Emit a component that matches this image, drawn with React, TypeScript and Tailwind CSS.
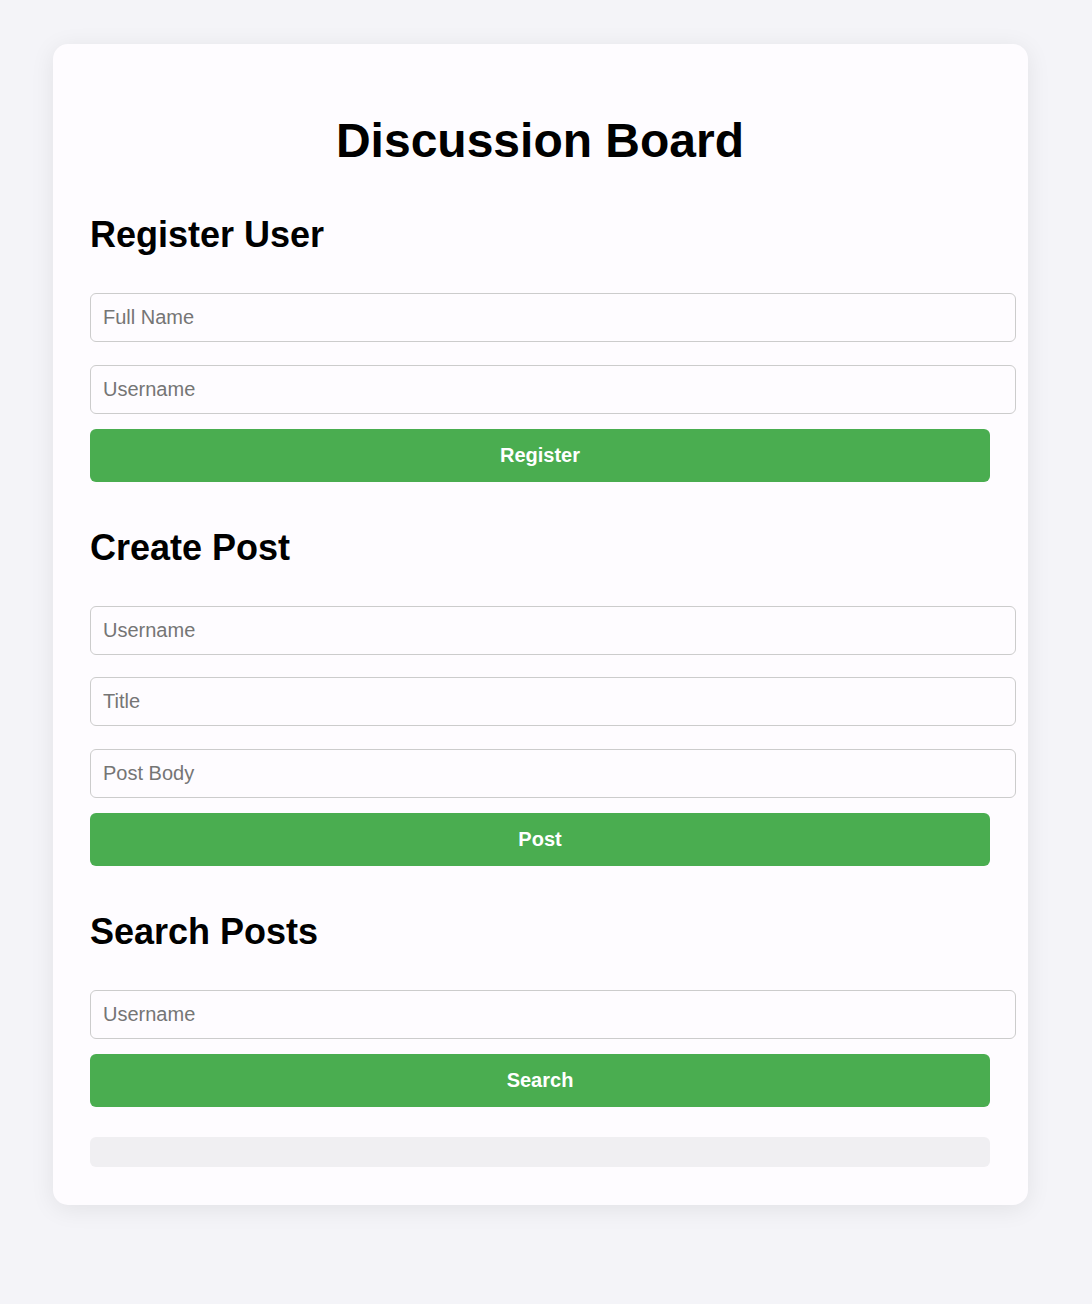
import { useState } from 'react';

const inputClass =
  'block w-[926px] px-[12px] py-[12px] border border-[#cccccc] rounded-[6px] bg-transparent text-[20px] leading-[23px] text-black placeholder:text-[#757575] outline-none';

const buttonClass =
  'block w-full py-[15px] rounded-[6px] bg-[#4aad50] text-white text-[20px] leading-[23px] font-bold cursor-pointer';

const headingClass = 'text-[36px] leading-[41px] font-bold text-black';

export default function App() {
  const [fullName, setFullName] = useState('');
  const [regUsername, setRegUsername] = useState('');
  const [postUsername, setPostUsername] = useState('');
  const [title, setTitle] = useState('');
  const [body, setBody] = useState('');
  const [searchUsername, setSearchUsername] = useState('');

  return (
    <div className="min-h-screen bg-[#f4f4f8] pt-[44px] pb-[99px] font-['Liberation_Sans',Arial,sans-serif]">
      <div className="ml-[53px] w-[975px] rounded-[15px] bg-[#fefcff] pl-[37px] pr-[38px] pt-[37px] pb-[38px] shadow-[0_4px_24px_rgba(0,0,0,0.08)]">
        <h1 className="mt-[32px] text-center text-[48px] leading-[55px] font-bold text-black">
          Discussion Board
        </h1>

        {/* register */}
        <h2 className={`mt-[46px] ${headingClass}`}>Register User</h2>
        <input
          className={`mt-[38px] ${inputClass}`}
          placeholder="Full Name"
          value={fullName}
          onChange={(e) => setFullName(e.target.value)}
        />
        <input
          className={`mt-[23px] ${inputClass}`}
          placeholder="Username"
          value={regUsername}
          onChange={(e) => setRegUsername(e.target.value)}
        />
        <button className={`mt-[15px] ${buttonClass}`}>Register</button>

        {/* create post */}
        <h2 className={`mt-[45px] ${headingClass}`}>Create Post</h2>
        <input
          className={`mt-[38px] ${inputClass}`}
          placeholder="Username"
          value={postUsername}
          onChange={(e) => setPostUsername(e.target.value)}
        />
        <input
          className={`mt-[22px] ${inputClass}`}
          placeholder="Title"
          value={title}
          onChange={(e) => setTitle(e.target.value)}
        />
        <input
          className={`mt-[23px] ${inputClass}`}
          placeholder="Post Body"
          value={body}
          onChange={(e) => setBody(e.target.value)}
        />
        <button className={`mt-[15px] ${buttonClass}`}>Post</button>

        {/* search */}
        <h2 className={`mt-[45px] ${headingClass}`}>Search Posts</h2>
        <input
          className={`mt-[38px] ${inputClass}`}
          placeholder="Username"
          value={searchUsername}
          onChange={(e) => setSearchUsername(e.target.value)}
        />
        <button className={`mt-[15px] ${buttonClass}`}>Search</button>

        <div className="mt-[30px] h-[30px] rounded-[6px] bg-[#f0eff2]" />
      </div>
    </div>
  );
}
